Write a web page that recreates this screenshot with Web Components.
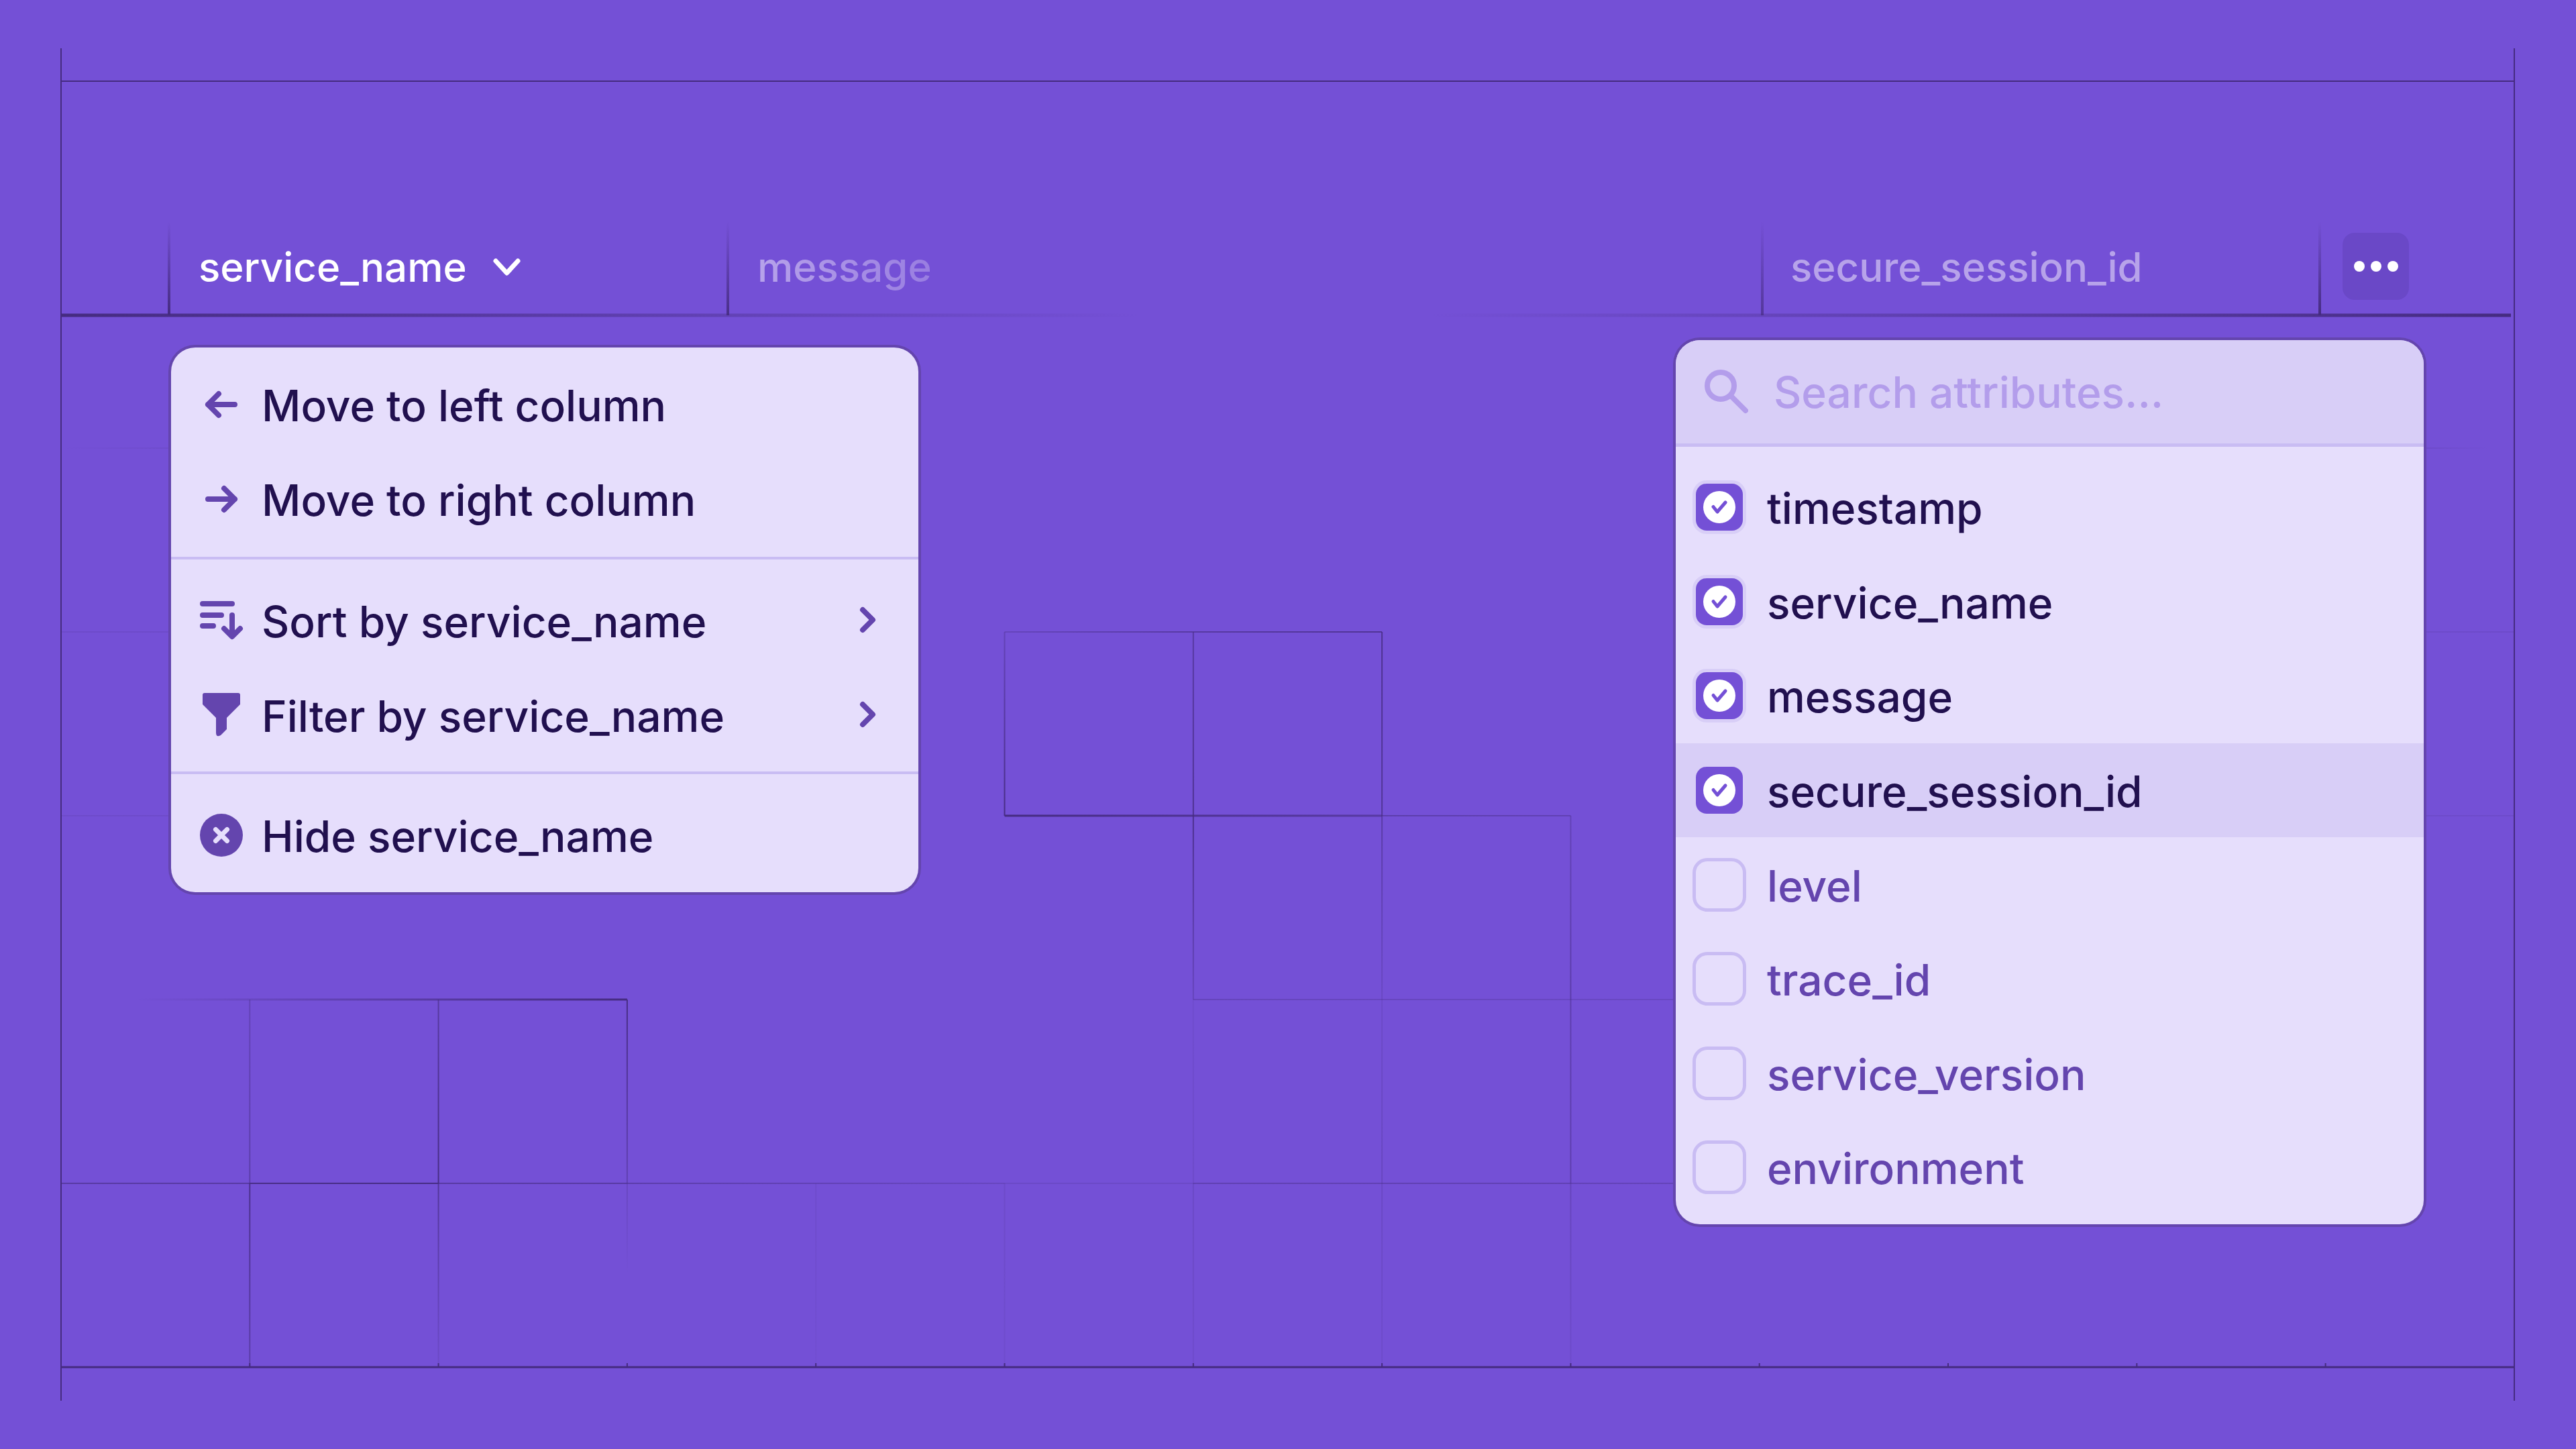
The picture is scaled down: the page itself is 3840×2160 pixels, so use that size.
<!DOCTYPE html>
<html>
<head>
<meta charset="utf-8">
<title>Column menus</title>
<style>
  html, body { margin: 0; background: #7450d6; }
  body { width: 3840px; height: 2160px; overflow: hidden; font-family: Inter, "Liberation Sans", sans-serif; }
</style>
</head>
<body>
<log-stage>
  <grid-lines slot="back"></grid-lines>
  <table-header slot="head">
    <head-cell active width="833">service_name</head-cell>
    <head-cell muted fade width="1540">message</head-cell>
    <head-cell muted width="867">secure_session_id</head-cell>
    <more-button></more-button>
  </table-header>
  <column-menu slot="left">
    <menu-group top="16" bottom="15">
      <menu-row icon="left">Move to left column</menu-row>
      <menu-row icon="right">Move to right column</menu-row>
    </menu-group>
    <menu-group top="22" bottom="13">
      <menu-row icon="sort" more>Sort by service_name</menu-row>
      <menu-row icon="filter" more>Filter by service_name</menu-row>
    </menu-group>
    <menu-group top="22" bottom="13">
      <menu-row icon="hide">Hide service_name</menu-row>
    </menu-group>
  </column-menu>
  <attribute-picker slot="right" placeholder="Search attributes...">
    <attribute-row checked>timestamp</attribute-row>
    <attribute-row checked>service_name</attribute-row>
    <attribute-row checked>message</attribute-row>
    <attribute-row checked hover>secure_session_id</attribute-row>
    <attribute-row>level</attribute-row>
    <attribute-row>trace_id</attribute-row>
    <attribute-row>service_version</attribute-row>
    <attribute-row>environment</attribute-row>
  </attribute-picker>
</log-stage>

<script>
const ICONS = {
  left: '<path d="M52 31H12M28 15L12 31L28 47"/>',
  right: '<path d="M12 31H52M36 15L52 31L36 47"/>',
  sort: '<path d="M4 6H48M4 23H32M4 39H20M48 23V54M36 43L48 55L60 43"/>',
  filter: '<path fill="#6445ae" stroke="none" d="M7 -2H57Q60 -2 60 1V15L40 35V52L31 61Q24 65 24 57V35L4 15V1Q4 -2 7 -2Z"/>',
  hide: '<circle cx="32" cy="31" r="32" fill="#6445ae" stroke="none"/><path stroke="#e6defc" stroke-width="7" d="M23.500 22.500L40.500 39.500M40.500 22.500L23.500 39.500"/>'
};

class LogStage extends HTMLElement {
  constructor() {
    super();
    this.attachShadow({ mode: 'open' }).innerHTML = `
      <style>
        :host { display: block; position: relative; width: 3840px; height: 2160px; }
        .back { position: absolute; inset: 0; }
        .body {
          position: relative;
          display: flex;
          flex-direction: column;
          padding: 347px 92px 0 252px;
        }
        .menus {
          display: flex;
          justify-content: space-between;
          align-items: flex-start;
          margin-top: 47px;
          padding: 0 135px 0 3px;
        }
        .right { display: block; margin-top: -11px; }
      </style>
      <div class="back"><slot name="back"></slot></div>
      <div class="body">
        <slot name="head"></slot>
        <div class="menus">
          <slot name="left"></slot>
          <div class="right"><slot name="right"></slot></div>
        </div>
      </div>`;
  }
}

// background rules: [x1, y1, x2, y2, opacity at start, opacity at end, width]
const X = i => 91 + i * 281.3;
const Y = i => 2038 - i * 274;
const RULES = [
  [91, 72, 91, 2088, 1, 1, 2],
  [3748, 72, 3748, 2088, 1, 1, 2],
  [91, 121, 3748, 121, 1, 1, 2],
  [91, 2038, 3748, 2038, 1, 1, 3],
  [91, 470, 1700, 470, 1, 0, 5],
  [2130, 470, 3743, 470, 0, 1, 5],
  [252, 330, 252, 470, 0, 1, 4],
  [1085, 330, 1085, 470, 0, .9, 4],
  [2627, 330, 2627, 470, 0, .7, 4],
  [3458, 330, 3458, 470, 0, 1, 4],

  [91, 668, 255, 668, .0, .12, 2],
  [3613, 668, 3710, 668, .15, 0, 2],
  [91, 942, 255, 942, .14, .14, 2],
  [3613, 942, 3748, 942, .14, .14, 2],
  [91, 1216, 255, 1216, .14, .14, 2],
  [3613, 1216, 3748, 1216, .14, .14, 2],

  [X(5), Y(4), X(6), Y(4), .3, .6, 2],
  [X(6), Y(4), X(7), Y(4), .6, .75, 2],
  [X(5), Y(4), X(5), Y(3), .35, .95, 2],
  [X(6), Y(4), X(6), Y(3), .6, .8, 2],
  [X(7), Y(4), X(7), Y(3), .8, .7, 2],
  [X(5), Y(3), X(7), Y(3), 1, .6, 3],
  [X(7), Y(3), X(8), Y(3), .5, .4, 2],
  [X(6), Y(3), X(6), Y(2), .85, .3, 2],
  [X(7), Y(3), X(7), Y(2), .55, .2, 2],
  [X(8), Y(3), X(8), Y(2), .35, .5, 2],
  [X(6), Y(2), X(6), Y(1), .1, .15, 2],
  [X(7), Y(2), X(7), Y(1), .15, .25, 2],
  [X(8), Y(2), X(8), Y(1), .45, .45, 2],
  [X(9), Y(2), X(9), Y(1), .05, .1, 2],
  [X(6), Y(2), X(9), Y(2), .3, .2, 2],
  [X(9), Y(2), 2498, Y(2), .15, .1, 2],
  [X(5), Y(1), X(5), Y(0), .15, .1, 2],
  [X(6), Y(1), X(6), Y(0), .2, .12, 2],
  [X(7), Y(1), X(7), Y(0), .2, .12, 2],
  [X(8), Y(1), X(8), Y(0), .3, .12, 2],
  [X(3), Y(1), X(9), Y(1), .2, .15, 2],
  [X(6), Y(1), X(8), Y(1), .3, .3, 2],
  [X(8), Y(1), X(9), Y(1), .25, .2, 2],
  [X(9), Y(1), 2498, Y(1), .12, .08, 2],

  [200, Y(2), X(3), Y(2), 0, 1, 3],
  [X(1), Y(2), X(1), Y(1), .35, .5, 2],
  [X(2), Y(2), X(2), Y(1), .6, .95, 2],
  [X(3), Y(2), X(3), Y(1), .95, .4, 2],
  [X(0), Y(1), X(3), Y(1), .6, .6, 2],
  [X(1), Y(1), X(2), Y(1), .8, .9, 2],
  [X(3), Y(1), X(5), Y(1), .4, .1, 2],
  [X(1), Y(1), X(1), Y(0), .85, .5, 2],
  [X(2), Y(1), X(2), Y(0), .7, .15, 2],
  [X(3), Y(1), X(3), 1900, .25, 0, 2],
  [X(4), Y(1), X(4), Y(0), .12, .05, 2]
];

class GridLines extends HTMLElement {
  connectedCallback() {
    let defs = '', lines = '';
    RULES.forEach(([x1, y1, x2, y2, a, b, w], i) => {
      defs += `<linearGradient id="r${i}" gradientUnits="userSpaceOnUse" x1="${x1}" y1="${y1}" x2="${x2}" y2="${y2}"><stop offset="0" stop-color="#452b80" stop-opacity="${a}"/><stop offset="1" stop-color="#452b80" stop-opacity="${b}"/></linearGradient>`;
      const rect = x1 === x2
        ? `x="${x1 - w / 2}" y="${y1}" width="${w}" height="${y2 - y1}"`
        : `x="${x1}" y="${y1 - w / 2}" width="${x2 - x1}" height="${w}"`;
      lines += `<rect ${rect} fill="url(#r${i})"/>`;
    });
    // small ticks on the bottom rule
    for (let i = 1; i < 13; i++) {
      lines += `<rect x="${X(i) - 1}" y="2032" width="2" height="6" fill="#452b80"/>`;
    }
    this.attachShadow({ mode: 'open' }).innerHTML = `
      <style>:host { display: block; width: 3840px; height: 2160px; } svg { display: block; }</style>
      <svg width="3840" height="2160" viewBox="0 0 3840 2160"><defs>${defs}</defs>${lines}</svg>`;
  }
}

class TableHeader extends HTMLElement {
  constructor() {
    super();
    this.attachShadow({ mode: 'open' }).innerHTML = `
      <style>:host { display: flex; align-items: flex-start; height: 124px; }</style>
      <slot></slot>`;
  }
}

class HeadCell extends HTMLElement {
  connectedCallback() {
    const active = this.hasAttribute('active');
    const muted = this.hasAttribute('muted');
    const fade = this.hasAttribute('fade');
    this.attachShadow({ mode: 'open' }).innerHTML = `
      <style>
        :host {
          display: flex;
          align-items: center;
          gap: 36px;
          box-sizing: border-box;
          width: ${this.getAttribute('width')}px;
          height: 100px;
          padding: 3px 0 0 44px;
          font: 450 60px/97px Inter, "Liberation Sans", sans-serif;
          color: ${muted ? '#b7a3ea' : '#fff'};
          white-space: nowrap;
        }
        .label { display: block; }
        .fade { -webkit-mask-image: linear-gradient(90deg, #000, rgba(0,0,0,.55)); mask-image: linear-gradient(90deg, #000, rgba(0,0,0,.55)); }
        svg { display: block; }
      </style>
      <span class="label ${fade ? 'fade' : ''}"><slot></slot></span>
      ${active ? `<svg width="48" height="48" viewBox="0 0 48 48" fill="none" stroke="#fff" stroke-width="7" stroke-linecap="round" stroke-linejoin="round"><path d="M7 14L23.500 32L40 14"/></svg>` : ''}`;
  }
}

class MoreButton extends HTMLElement {
  constructor() {
    super();
    this.attachShadow({ mode: 'open' }).innerHTML = `
      <style>
        :host {
          display: flex;
          align-items: center;
          justify-content: center;
          gap: 9px;
          width: 99px;
          height: 100px;
          border-radius: 18px;
          background: #6a48c7;
        }
        i { width: 16px; height: 16px; border-radius: 50%; background: #fff; }
      </style>
      <i></i><i></i><i></i>`;
  }
}

class ColumnMenu extends HTMLElement {
  constructor() {
    super();
    this.attachShadow({ mode: 'open' }).innerHTML = `
      <style>
        :host {
          display: flex;
          flex-direction: column;
          width: 1114px;
          border-radius: 36px;
          background: #e6defc;
          box-shadow: 0 0 0 4px #6445ae;
          overflow: hidden;
        }
        ::slotted(menu-group:not(:first-child)) { border-top: 4px solid #c9bcf3; }
      </style>
      <slot></slot>`;
  }
}

class MenuGroup extends HTMLElement {
  connectedCallback() {
    this.attachShadow({ mode: 'open' }).innerHTML = `
      <style>
        :host {
          display: block;
          padding: ${this.getAttribute('top')}px 0 ${this.getAttribute('bottom')}px;
        }
      </style>
      <slot></slot>`;
  }
}

class MenuRow extends HTMLElement {
  connectedCallback() {
    const name = this.getAttribute('icon');
    this.attachShadow({ mode: 'open' }).innerHTML = `
      <style>
        :host {
          display: flex;
          align-items: center;
          height: 140.500px;
          padding: 0 64px 0 43px;
          font: 450 64px/1 Inter, "Liberation Sans", sans-serif;
          color: #21104f;
        }
        .icon { flex: none; width: 64px; height: 64px; margin-right: 28px; }
        .label { flex: 1; white-space: nowrap; padding-top: 2px; }
        .chev { flex: none; margin-top: -4px; }
        svg { display: block; overflow: visible; }
      </style>
      <svg class="icon" viewBox="0 0 64 64" fill="none" stroke="#6445ae" stroke-width="8" stroke-linecap="round" stroke-linejoin="round">${ICONS[name]}</svg>
      <span class="label"><slot></slot></span>
      ${this.hasAttribute('more') ? `<svg class="chev" width="24" height="40" viewBox="0 0 24 40" fill="none" stroke="#6445ae" stroke-width="8" stroke-linecap="round" stroke-linejoin="round"><path d="M5 5L20 20L5 35"/></svg>` : ''}`;
  }
}

class AttributePicker extends HTMLElement {
  connectedCallback() {
    this.attachShadow({ mode: 'open' }).innerHTML = `
      <style>
        :host {
          display: block;
          width: 1115px;
          border-radius: 36px;
          background: #e6defc;
          box-shadow: 0 0 0 4px #6445ae;
          overflow: hidden;
        }
        .search {
          display: flex;
          align-items: center;
          gap: 38px;
          box-sizing: border-box;
          height: 159px;
          padding-left: 42px;
          background: #d8cef7;
          border-bottom: 5px solid #c9bcf3;
          font: 450 64px/1 Inter, "Liberation Sans", sans-serif;
          color: #b39deb;
          white-space: nowrap;
        }
        .search svg { display: block; flex: none; }
        .search span { padding-top: 2px; }
        .rows { padding: 20px 0 14px; }
      </style>
      <div class="search">
        <svg width="66" height="66" viewBox="0 0 66 66" fill="none" stroke="#b39deb" stroke-width="8" stroke-linecap="round"><circle cx="25" cy="24" r="20"/><path d="M40 39L62 61"/></svg>
        <span>${this.getAttribute('placeholder')}</span>
      </div>
      <div class="rows"><slot></slot></div>`;
  }
}

class AttributeRow extends HTMLElement {
  connectedCallback() {
    const on = this.hasAttribute('checked');
    this.attachShadow({ mode: 'open' }).innerHTML = `
      <style>
        :host {
          display: flex;
          align-items: center;
          height: 140.600px;
          padding-left: 30px;
          background: ${this.hasAttribute('hover') ? '#d8cef7' : 'transparent'};
          font: 450 64px/1 Inter, "Liberation Sans", sans-serif;
          color: ${on ? '#21104f' : '#6445ae'};
          white-space: nowrap;
        }
        .box {
          flex: none;
          box-sizing: border-box;
          display: flex;
          align-items: center;
          justify-content: center;
          width: 70px;
          height: 70px;
          margin-right: 36px;
          border-radius: 16px;
          background: #7450d6;
          box-shadow: 0 0 0 5px #d8cef7;
        }
        .box.off {
          width: 80px;
          height: 80px;
          margin: 0 31px 0 -5px;
          border-radius: 22px;
          background: transparent;
          border: 5px solid #c9bcf3;
          box-shadow: none;
        }
        .label { padding-top: 4px; }
        svg { display: block; }
      </style>
      <span class="box ${on ? '' : 'off'}">
        ${on ? `<svg width="48" height="48" viewBox="0 0 48 48"><circle cx="24" cy="24" r="24" fill="#fff"/><path d="M15 23.500L21 31L33 17" fill="none" stroke="#7450d6" stroke-width="5" stroke-linecap="round" stroke-linejoin="round"/></svg>` : ''}
      </span>
      <span class="label"><slot></slot></span>`;
  }
}

customElements.define('log-stage', LogStage);
customElements.define('grid-lines', GridLines);
customElements.define('table-header', TableHeader);
customElements.define('head-cell', HeadCell);
customElements.define('more-button', MoreButton);
customElements.define('column-menu', ColumnMenu);
customElements.define('menu-group', MenuGroup);
customElements.define('menu-row', MenuRow);
customElements.define('attribute-picker', AttributePicker);
customElements.define('attribute-row', AttributeRow);
</script>
</body>
</html>
